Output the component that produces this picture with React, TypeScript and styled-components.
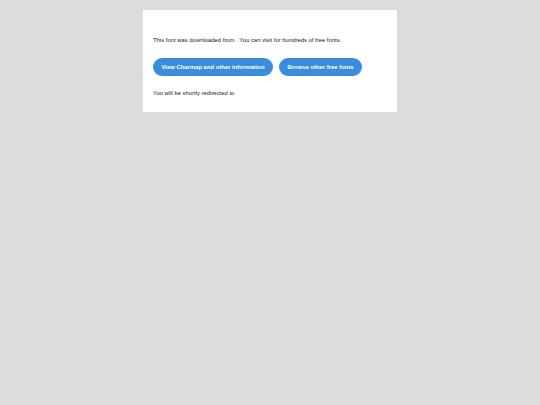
import React from 'react';
import styled, { createGlobalStyle } from 'styled-components';

const GlobalStyle = createGlobalStyle`
  html, body {
    margin: 0;
    padding: 0;
    background: #dcdcdc;
    font-family: "Liberation Sans", Arial, sans-serif;
  }
`;

const Page = styled.div`
  min-height: 405px;
  padding-top: 10px;
  box-sizing: border-box;
`;

const Card = styled.div`
  width: 254px;
  margin: 0 auto;
  background: #ffffff;
  box-sizing: border-box;
  padding: 26px 10px 15px;
  color: #1a1a1a;
`;

const Text = styled.p`
  margin: 0;
  font-size: 5.9px;
  line-height: 8px;
`;

const Actions = styled.div`
  display: flex;
  gap: 6px;
  margin: 14px 0 13px;
`;

const Button = styled.a`
  display: inline-flex;
  align-items: center;
  justify-content: center;
  height: 18px;
  padding: 0 8.5px;
  border-radius: 9px;
  background: #3a8ddd;
  color: #ffffff;
  font-size: 5.9px;
  font-weight: bold;
  text-decoration: none;
`;

export default function App() {
  return (
    <>
      <GlobalStyle />
      <Page>
        <Card>
          <Text>This font was downloaded from . You can visit for hundreds of free fonts.</Text>
          <Actions>
            <Button>View Charmap and other information</Button>
            <Button>Browse other free fonts</Button>
          </Actions>
          <Text>You will be shortly redirected to</Text>
        </Card>
      </Page>
    </>
  );
}
